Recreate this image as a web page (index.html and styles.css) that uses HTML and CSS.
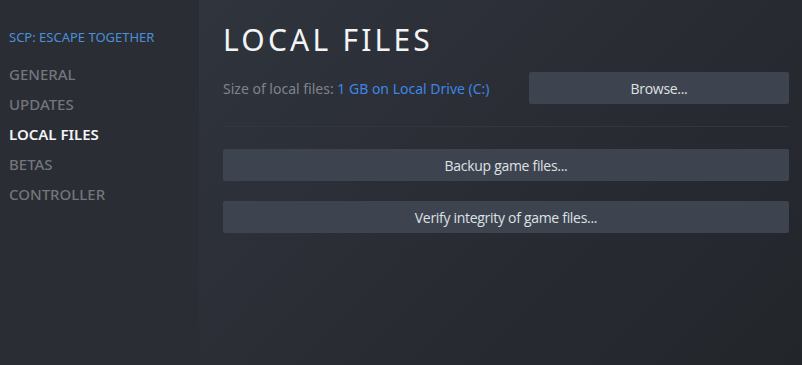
FILE: index.html
```html
<!DOCTYPE html>
<html lang="en">
<head>
    <meta charset="UTF-8">
    <title>Properties - Local Files</title>
    <link rel="stylesheet" href="styles.css">
</head>
<body>
    <nav class="sidebar">
        <p class="game-title">SCP: ESCAPE TOGETHER</p>
        <ul class="menu">
            <li>GENERAL</li>
            <li>UPDATES</li>
            <li class="active">LOCAL FILES</li>
            <li>BETAS</li>
            <li>CONTROLLER</li>
        </ul>
    </nav>
    <main class="content">
        <h1 class="page-title">LOCAL FILES</h1>
        <div class="size-row">
            <p class="size-text">Size of local files: <a href="#" class="size-link">1 GB on Local Drive (C:)</a></p>
            <button class="btn btn-browse">Browse...</button>
        </div>
        <div class="divider"></div>
        <button class="btn btn-wide">Backup game files...</button>
        <button class="btn btn-wide">Verify integrity of game files...</button>
    </main>
</body>
</html>
```

FILE: styles.css
```css
* {
    margin: 0;
    padding: 0;
    box-sizing: border-box;
}
ul { list-style: none; }

html, body {
    height: 100%;
}
body {
    display: flex;
    font-family: "Noto Sans", "Open Sans", sans-serif;
    background: #2a2d34;
    overflow: hidden;
}

.sidebar {
    width: 199px;
    flex-shrink: 0;
    background: #2a2d34;
    padding: 27px 0 0 9px;
}
.game-title {
    font-size: 13px;
    line-height: 20px;
    color: #4a8fd8;
    margin-bottom: 12px;
}
.menu li {
    font-size: 15px;
    line-height: 30px;
    font-weight: 500;
    color: #73767c;
}
.menu li.active {
    color: #f2f3f4;
    font-weight: 600;
}

.content {
    flex: 1;
    display: flex;
    flex-direction: column;
    padding: 22px 13px 0 24px;
    background: linear-gradient(135deg, #30343d 0%, #292c33 50%, #22252a 100%);
}
.page-title {
    font-size: 30px;
    line-height: 36px;
    font-weight: 400;
    letter-spacing: 3.2px;
    color: #f3f4f5;
    margin-bottom: 14px;
}
.size-row {
    display: flex;
    align-items: center;
    height: 32px;
}
.size-text {
    flex: 1;
    font-size: 14px;
    color: #7f848b;
}
.size-link {
    color: #3e86e6;
    text-decoration: none;
}

.btn {
    height: 32px;
    border: none;
    border-radius: 2px;
    background: #3d4450;
    color: #dfe1e3;
    font-family: "Open Sans", "Noto Sans", sans-serif;
    font-size: 14px;
    letter-spacing: -0.3px;
}
.btn-browse {
    width: 260px;
}
.divider {
    height: 1px;
    background: #32363e;
    margin-top: 22px;
}
.btn-wide {
    width: 100%;
    margin-top: 22px;
}
.btn-wide + .btn-wide {
    margin-top: 20px;
}
```
